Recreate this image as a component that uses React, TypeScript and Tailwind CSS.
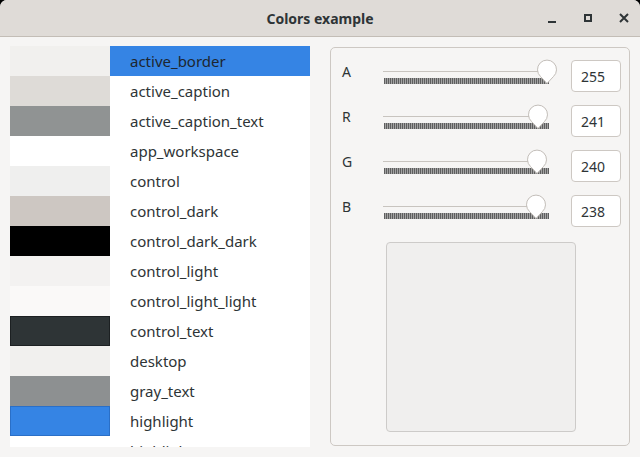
import React from 'react';

const font = { fontFamily: '"Noto Sans", "Open Sans", sans-serif' };

const COLORS: { name: string; swatch: string }[] = [
  { name: 'active_border', swatch: 'bg-[#f1f0ee]' },
  { name: 'active_caption', swatch: 'bg-[#dedbd7]' },
  { name: 'active_caption_text', swatch: 'bg-[#909393]' },
  { name: 'app_workspace', swatch: 'bg-[#ffffff]' },
  { name: 'control', swatch: 'bg-[#efefee]' },
  { name: 'control_dark', swatch: 'bg-[#cdc7c2]' },
  { name: 'control_dark_dark', swatch: 'bg-[#000000]' },
  { name: 'control_light', swatch: 'bg-[#f3f2f1]' },
  { name: 'control_light_light', swatch: 'bg-[#faf9f8]' },
  { name: 'control_text', swatch: 'bg-[#2e3436] border border-[#1c2022]' },
  { name: 'desktop', swatch: 'bg-[#f1f0ee]' },
  { name: 'gray_text', swatch: 'bg-[#8d9091]' },
  { name: 'highlight', swatch: 'bg-[#3584e4] border border-[#2a6fc7]' },
  { name: 'highlight_text', swatch: 'bg-[#ffffff]' },
];

const CHANNELS = [
  { label: 'A', value: 255 },
  { label: 'R', value: 241 },
  { label: 'G', value: 240 },
  { label: 'B', value: 238 },
];

function Thumb() {
  return (
    <svg width="22" height="26" viewBox="0 0 22 26">
      <path
        d="M11 24.5 L4.6 17.6 A9.5 9.5 0 1 1 17.4 17.6 Z"
        fill="#ffffff"
        stroke="#c2bdb8"
        strokeWidth="1"
      />
    </svg>
  );
}

function Slider({ value }: { value: number }) {
  const x = (value / 255) * 164;
  return (
    <div className="relative w-[170px] h-[30px]">
      <div className="absolute left-0 top-[10px] h-px bg-[#c8c4bf]" style={{ width: x + 1 }} />
      <div className="absolute left-[1px] top-[17px] w-[165px] h-[6px] bg-[repeating-linear-gradient(90deg,#5e5e5e_0px,#5e5e5e_1px,#a3a3a3_1px,#a3a3a3_2px)]" />
      <div className="absolute top-[-2px]" style={{ left: x - 11 }}>
        <Thumb />
      </div>
    </div>
  );
}

export default function App() {
  return (
    <div className="w-[640px] h-[457px] bg-black overflow-hidden text-[#2e3436]" style={font}>
      <div className="w-full h-full flex flex-col rounded-t-[7px] overflow-hidden bg-[#f6f5f4]">
        <div className="h-[37px] shrink-0 relative flex items-center justify-center bg-[#dfdbd7] border-b border-[#c3bdb6]">
          <span className="text-[14px] font-bold text-[#2e3436]">Colors example</span>
          <div className="absolute right-[-2px] top-0 h-full flex items-center">
            <div className="w-[36px] flex justify-center">
              <div className="w-[8px] h-[2px] bg-[#2e3436] mt-[7px]" />
            </div>
            <div className="w-[36px] flex justify-center">
              <div className="w-[8px] h-[8px] border-2 border-[#2e3436]" />
            </div>
            <div className="w-[36px] flex justify-center">
              <svg width="10" height="10" viewBox="0 0 10 10">
                <path d="M1 1 L9 9 M9 1 L1 9" stroke="#2e3436" strokeWidth="2" />
              </svg>
            </div>
          </div>
        </div>
        <div className="flex-1 flex pt-[9px] pb-[10px] pl-[10px] pr-[10px] gap-[20px]">
          <div className="w-[300px] h-[401px] bg-white overflow-hidden">
            {COLORS.map((c, i) => (
              <div key={c.name} className="flex h-[30px]">
                <div className={`w-[100px] h-full ${c.swatch}`} />
                <div
                  className={`flex-1 flex items-center pl-[20px] text-[15px] ${
                    i === 0 ? 'bg-[#3584e4] text-[#1d2630]' : ''
                  }`}
                >
                  {c.name}
                </div>
              </div>
            ))}
          </div>
          <div className="w-[300px] mt-[1px] h-[399px] border border-[#cdc8c3] rounded-[5px] flex flex-col">
            <div className="flex flex-col gap-[13px] pt-[12px]">
              {CHANNELS.map((ch) => (
                <div key={ch.label} className="flex items-center h-[32px]">
                  <div className="w-[52px] pl-[11px] text-[14px] self-start pt-[1px]">{ch.label}</div>
                  <div className="w-[188px] self-start pt-[1px]">
                    <Slider value={ch.value} />
                  </div>
                  <div className="w-[50px] h-[32px] bg-white border border-[#cdc8c3] rounded-[4px] flex items-center pl-[9px] text-[14px]">
                    {ch.value}
                  </div>
                </div>
              ))}
            </div>
            <div className="flex justify-center pt-[15px] pl-[2px]">
              <div className="w-[190px] h-[190px] bg-[#f0efee] border border-[#cdcbc9] rounded-[4px]" />
            </div>
          </div>
        </div>
      </div>
    </div>
  );
}
